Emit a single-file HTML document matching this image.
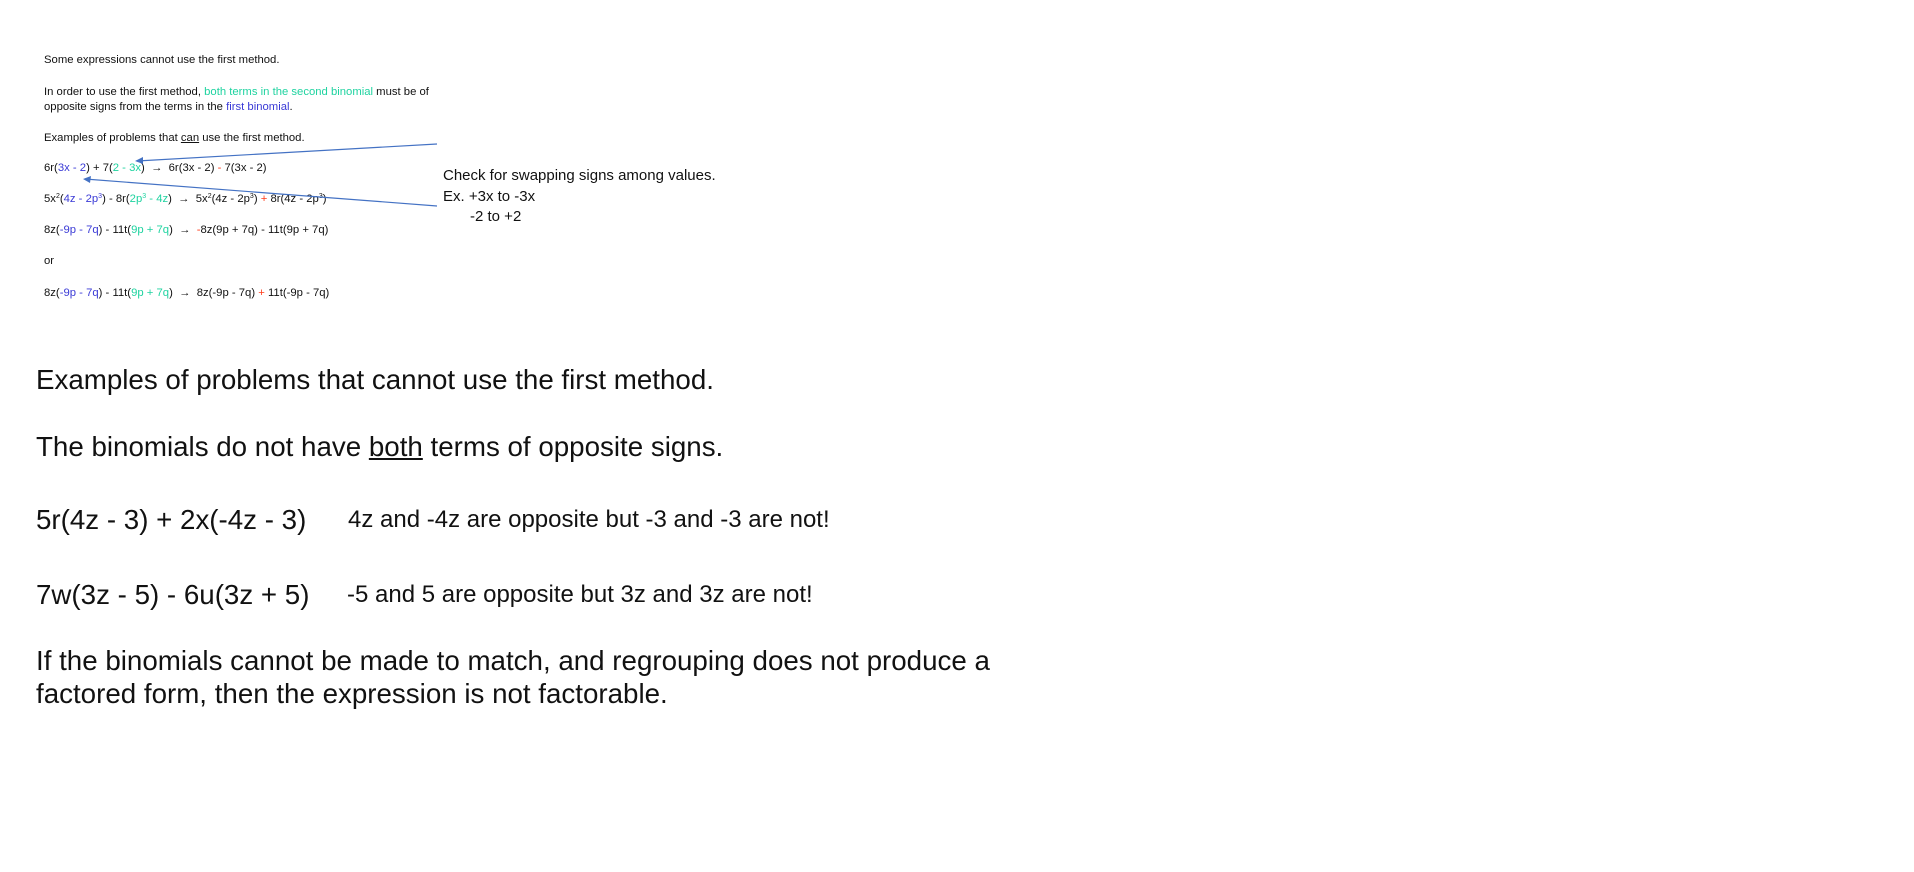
<!DOCTYPE html>
<html><head><meta charset="utf-8"><style>
body{margin:0;width:1914px;height:872px;background:#fff;position:relative;overflow:hidden;font-family:"Liberation Sans",Arial,sans-serif;color:#111}
.s{position:absolute;left:44px;font-size:11.3px;line-height:14px;white-space:nowrap}
.b{color:#3a3ad6}.g{color:#1fd3a0}.r{color:#ff3b1a}
.c{position:absolute;font-size:15px;line-height:18px;white-space:nowrap;color:#111}
.L{position:absolute;left:36px;font-size:28px;line-height:32px;white-space:nowrap;color:#111;transform:scaleX(0.99);transform-origin:0 0}
.m{position:absolute;font-size:24px;line-height:28px;white-space:nowrap;color:#111}
sup{font-size:7px;vertical-align:4px;line-height:0}
</style></head><body>
<div class="s" style="top:53px">Some expressions cannot use the first method.</div>
<div class="s" style="top:85px">In order to use the first method, <span class="g">both terms in the second binomial</span> must be of</div>
<div class="s" style="top:100px">opposite signs from the terms in the <span class="b">first binomial</span>.</div>
<div class="s" style="top:131px">Examples of problems that <u>can</u> use the first method.</div>
<div class="s" style="top:161px">6r(<span class="b">3x - 2</span>) + 7(<span class="g">2 - 3x</span>) &nbsp;→ &nbsp;6r(3x - 2) <span class="r">-</span> 7(3x - 2)</div>
<div class="s" style="top:192px">5x<sup>2</sup>(<span class="b">4z - 2p<sup>3</sup></span>) - 8r(<span class="g">2p<sup>3</sup> - 4z</span>) &nbsp;→ &nbsp;5x<sup>2</sup>(4z - 2p<sup>3</sup>) <span class="r">+</span> 8r(4z - 2p<sup>3</sup>)</div>
<div class="s" style="top:223px">8z(<span class="b">-9p - 7q</span>) - 11t(<span class="g">9p + 7q</span>) &nbsp;→ &nbsp;<span class="r">-</span>8z(9p + 7q) - 11t(9p + 7q)</div>
<div class="s" style="top:254px">or</div>
<div class="s" style="top:286px">8z(<span class="b">-9p - 7q</span>) - 11t(<span class="g">9p + 7q</span>) &nbsp;→ &nbsp;8z(-9p - 7q) <span class="r">+</span> 11t(-9p - 7q)</div>
<svg style="position:absolute;left:0;top:0" width="1914" height="872">
<g stroke="#4472c4" stroke-width="1.2" fill="none">
<line x1="437" y1="144" x2="137" y2="161"/>
<line x1="437" y1="206" x2="85" y2="179"/>
</g>
<g fill="#4472c4">
<path d="M135 161 l8 -4 l0 7z"/>
<path d="M83 179 l8 -3 l-1 7z"/>
</g>
</svg>
<div class="c" style="left:443px;top:167px">Check for swapping signs among values.</div>
<div class="c" style="left:443px;top:188px">Ex. +3x to -3x</div>
<div class="c" style="left:470px;top:208px">-2 to +2</div>
<div class="L" style="top:364px">Examples of problems that cannot use the first method.</div>
<div class="L" style="top:431px">The binomials do not have <u>both</u> terms of opposite signs.</div>
<div class="L" style="top:504px">5r(4z - 3) + 2x(-4z - 3)</div>
<div class="m" style="left:348px;top:506px">4z and -4z are opposite but -3 and -3 are not!</div>
<div class="L" style="top:579px">7w(3z - 5) - 6u(3z + 5)</div>
<div class="m" style="left:347px;top:581px">-5 and 5 are opposite but 3z and 3z are not!</div>
<div class="L" style="top:645px">If the binomials cannot be made to match, and regrouping does not produce a</div>
<div class="L" style="top:678px">factored form, then the expression is not factorable.</div>
</body></html>
